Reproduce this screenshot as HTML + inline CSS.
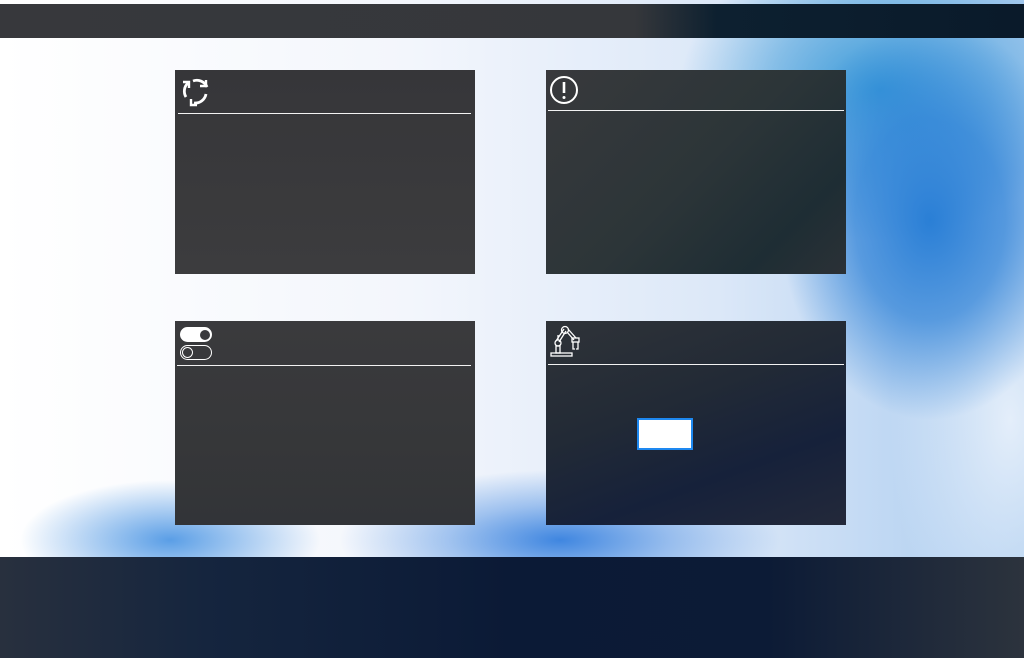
<!DOCTYPE html>
<html><head><meta charset="utf-8"><style>
*{margin:0;padding:0;box-sizing:border-box}
body{width:1024px;height:658px;overflow:hidden;position:relative;font-family:"Liberation Sans",sans-serif;
background:
radial-gradient(ellipse 150px 200px at 930px 220px,#2a7fd6 0%,rgba(42,127,214,0.7) 50%,rgba(42,127,214,0) 100%),
radial-gradient(ellipse 200px 150px at 880px 90px,#3a9ad8 0%,rgba(58,154,216,0.5) 55%,rgba(58,154,216,0) 100%),
radial-gradient(ellipse 220px 70px at 560px 540px,#3f86e0 0%,rgba(63,134,224,0.45) 50%,rgba(63,134,224,0) 100%),
radial-gradient(ellipse 150px 60px at 170px 540px,#5a9ee6 0%,rgba(90,158,230,0) 100%),
radial-gradient(ellipse 120px 250px at 1010px 420px,#e4eefa 0%,rgba(228,238,250,0) 100%),
linear-gradient(90deg,#ffffff 0%,#f3f6fc 40%,#dce8f8 70%,#a9cbef 100%);}
.top{position:absolute;left:0;top:4px;width:1024px;height:34px;background:linear-gradient(90deg,#37383c 0%,#35373b 62%,#0d2030 70%,#0a1a2a 100%);}
.bot{position:absolute;left:0;top:557px;width:1024px;height:101px;background:linear-gradient(90deg,#28303e 0%,#15253e 20%,#0b1a36 50%,#0c1b36 75%,#2c333d 100%);}
.p{position:absolute;width:300px;height:204px;background:#3b3b3d}
.line{position:absolute;height:1px;background:#f2f2f2}
</style></head><body>
<div class="top"></div>
<div class="bot"></div>

<div class="p" style="left:175px;top:70px;background:linear-gradient(180deg,#363639,#3c3c3e)">
  <svg style="position:absolute;left:5px;top:7px" width="32" height="30" viewBox="0 0 32 30" fill="none" stroke="#fff" stroke-width="2.8">
    <path d="M8 6 A11 11 0 0 0 6 20"/><path d="M3 5 L9 5 L9 11" stroke-width="2.4"/>
    <path d="M13 4 A11 11 0 0 1 27 10"/><path d="M26 3 L26 9 L20 9" stroke-width="2.4"/>
    <path d="M26 17 A11 11 0 0 1 14 26"/><path d="M11 22 L11 28 L17 28" stroke-width="2.4"/>
  </svg>
  <div class="line" style="left:3px;top:43px;width:293px"></div>
</div>

<div class="p" style="left:546px;top:70px;background:linear-gradient(135deg,#38393c 0%,#2c3538 50%,#1e2d34 80%,#2b3136 100%)">
  <svg style="position:absolute;left:2px;top:5px" width="32" height="32" viewBox="0 0 32 32" fill="none" stroke="#fff" stroke-width="2">
    <circle cx="16" cy="15" r="13"/><path d="M16 7 L16 18" stroke-width="2.6"/><circle cx="16" cy="22.5" r="1.5" fill="#fff" stroke="none"/>
  </svg>
  <div class="line" style="left:2px;top:40px;width:296px"></div>
</div>

<div class="p" style="left:175px;top:321px;background:linear-gradient(180deg,#3a3a3d,#363739 60%,#323438)">
  <div style="position:absolute;left:5px;top:6px;width:32px;height:15px;border-radius:8px;background:#fff"></div>
  <div style="position:absolute;left:25px;top:9px;width:10px;height:10px;border-radius:50%;background:#3a3a3d"></div>
  <div style="position:absolute;left:5px;top:24px;width:32px;height:15px;border-radius:8px;border:1.3px solid #fff"></div>
  <div style="position:absolute;left:7px;top:26px;width:11px;height:11px;border-radius:50%;border:1.3px solid #fff"></div>
  <div class="line" style="left:2px;top:44px;width:294px"></div>
</div>

<div class="p" style="left:546px;top:321px;background:linear-gradient(160deg,#2f3338 0%,#222a36 40%,#16213a 70%,#23293a 100%)">
  <svg style="position:absolute;left:4px;top:4px" width="36" height="32" viewBox="0 0 36 32" fill="none" stroke="#fff" stroke-width="1.3">
    <rect x="1" y="28" width="21" height="3"/><rect x="6" y="21" width="4" height="7"/>
    <circle cx="8" cy="18" r="3"/><path d="M8 15 L8 10 M6 16 L14 4 M9 17 L16 6"/><circle cx="15" cy="5" r="3.5"/>
    <path d="M17 7 L24 15 M18 4 L26 13"/><rect x="22" y="13" width="7" height="4"/>
    <path d="M23 17 L23 24 L25 24 M28 17 L28 24 L26 24"/>
  </svg>
  <div class="line" style="left:2px;top:43px;width:296px"></div>
  <div style="position:absolute;left:91px;top:97px;width:56px;height:32px;background:#fff;border:2px solid #1e88f0"></div>
</div>
</body></html>
